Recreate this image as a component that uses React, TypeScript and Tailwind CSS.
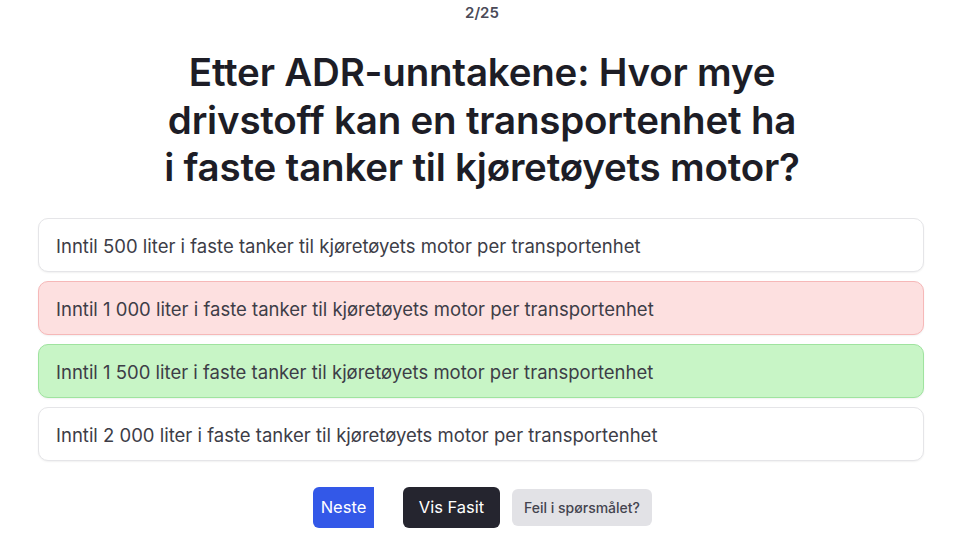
const options = [
  { text: "Inntil 500 liter i faste tanker til kjøretøyets motor per transportenhet", state: "none" },
  { text: "Inntil 1 000 liter i faste tanker til kjøretøyets motor per transportenhet", state: "wrong" },
  { text: "Inntil 1 500 liter i faste tanker til kjøretøyets motor per transportenhet", state: "right" },
  { text: "Inntil 2 000 liter i faste tanker til kjøretøyets motor per transportenhet", state: "none" },
];

export default function App() {
  return (
    <div className="min-h-screen bg-white font-['Inter',sans-serif] text-[#1f1f28]">
      <div className="flex flex-col items-center pt-[3px]">
        <p className="text-[15px] font-semibold leading-5 text-[#4a4a57]">2/25</p>
        <h1 className="mt-[26px] max-w-[640px] text-center text-[38.5px] font-semibold leading-[47.5px] tracking-[-0.2px] text-[#1d1d26]">
          Etter ADR-unntakene: Hvor mye drivstoff kan en transportenhet ha i faste tanker til kjøretøyets motor?
        </h1>
      </div>
      <div className="ml-[38px] mt-[26px] flex w-[886px] flex-col gap-[9px]">
        {options.map((o) => (
          <div
            key={o.text}
            className={
              "flex h-[54px] items-center rounded-[10px] border px-[17px] pt-[4px] text-[18.5px] text-[#3d3d47] shadow-[0_1px_2px_rgba(0,0,0,0.06)] " +
              (o.state === "wrong"
                ? "border-[#f6b8b8] bg-[#fde0e0]"
                : o.state === "right"
                ? "border-[#9fe39f] bg-[#c8f5c6]"
                : "border-[#e5e5e8] bg-white")
            }
          >
            {o.text}
          </div>
        ))}
      </div>
      <div className="mt-[26px] flex items-center justify-center pl-[1px]">
        <button className="h-[41px] w-[61px] rounded-l-[6px] bg-[#3358e8] pt-[1px] text-[16.5px] font-normal text-white">
          Neste
        </button>
        <button className="ml-[29px] h-[41px] w-[97px] rounded-[6px] bg-[#25252f] pt-[1px] text-[16.5px] font-normal text-white">
          Vis Fasit
        </button>
        <button className="ml-[12px] h-[37px] w-[140px] rounded-[6px] bg-[#e2e2e6] pt-[1px] text-[14px] font-medium text-[#44444f]">
          Feil i spørsmålet?
        </button>
      </div>
    </div>
  );
}
